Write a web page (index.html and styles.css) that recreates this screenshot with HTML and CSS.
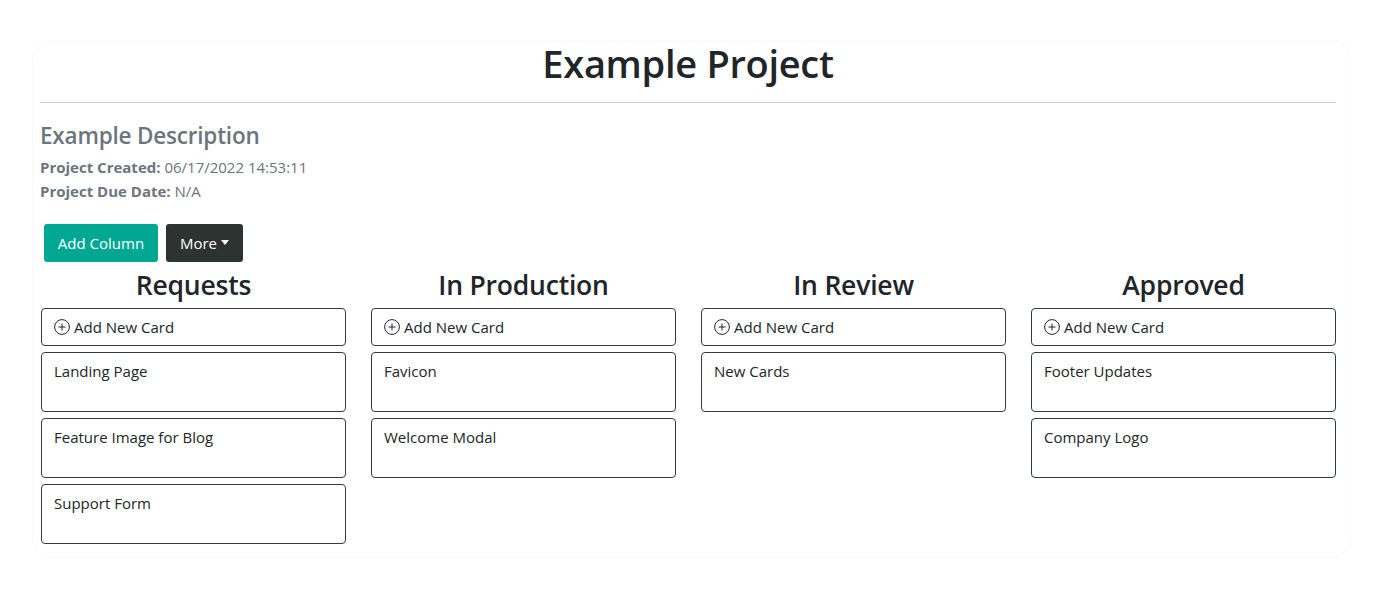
FILE: index.html
```html
<!DOCTYPE html>
<html lang="en">
<head>
<meta charset="utf-8">
<title>Example Project</title>
<link rel="stylesheet" href="styles.css">
</head>
<body>
<div class="project">
  <h1 class="title">Example Project</h1>
  <hr class="rule">
  <h4 class="desc">Example Description</h4>
  <div class="meta"><b>Project Created:</b> 06/17/2022 14:53:11</div>
  <div class="meta"><b>Project Due Date:</b> N/A</div>
  <div class="actions">
    <button class="btn btn-teal">Add Column</button>
    <button class="btn btn-dark">More<span class="caret"></span></button>
  </div>
  <div class="board">
    <div class="column">
      <h2 class="col-title">Requests</h2>
      <div class="card add-card"><svg class="plus" viewBox="0 0 16 16" width="16" height="16"><circle cx="8" cy="8" r="7.4" fill="none" stroke="currentColor" stroke-width="1"/><path d="M8 4.5v7M4.5 8h7" stroke="currentColor" stroke-width="1" fill="none"/></svg>Add New Card</div>
      <div class="card item">Landing Page</div>
      <div class="card item">Feature Image for Blog</div>
      <div class="card item">Support Form</div>
    </div>
    <div class="column">
      <h2 class="col-title">In Production</h2>
      <div class="card add-card"><svg class="plus" viewBox="0 0 16 16" width="16" height="16"><circle cx="8" cy="8" r="7.4" fill="none" stroke="currentColor" stroke-width="1"/><path d="M8 4.5v7M4.5 8h7" stroke="currentColor" stroke-width="1" fill="none"/></svg>Add New Card</div>
      <div class="card item">Favicon</div>
      <div class="card item">Welcome Modal</div>
    </div>
    <div class="column">
      <h2 class="col-title">In Review</h2>
      <div class="card add-card"><svg class="plus" viewBox="0 0 16 16" width="16" height="16"><circle cx="8" cy="8" r="7.4" fill="none" stroke="currentColor" stroke-width="1"/><path d="M8 4.5v7M4.5 8h7" stroke="currentColor" stroke-width="1" fill="none"/></svg>Add New Card</div>
      <div class="card item">New Cards</div>
    </div>
    <div class="column">
      <h2 class="col-title">Approved</h2>
      <div class="card add-card"><svg class="plus" viewBox="0 0 16 16" width="16" height="16"><circle cx="8" cy="8" r="7.4" fill="none" stroke="currentColor" stroke-width="1"/><path d="M8 4.5v7M4.5 8h7" stroke="currentColor" stroke-width="1" fill="none"/></svg>Add New Card</div>
      <div class="card item">Footer Updates</div>
      <div class="card item">Company Logo</div>
    </div>
  </div>
</div>
</body>
</html>
```
FILE: styles.css
```css
* { box-sizing: border-box; }
body {
  margin: 0;
  background: #fff;
  font-family: "Open Sans", "Noto Sans", sans-serif;
  color: #212529;
}
.project {
  margin: 40px 24px 0 32px;
  padding: 0 14px 12px 7px;
  height: 518px;
  border: 1px solid #f9f9f9;
  border-radius: 20px;
}
.title {
  margin: 0;
  font-size: 38px;
  font-weight: 600;
  line-height: 45px;
  text-align: center;
  letter-spacing: -0.3px;
}
.rule {
  margin: 16px 0 0;
  border: 0;
  border-top: 1px solid #cfcfcf;
}
.desc {
  margin: 18px 0 5px;
  font-size: 22.5px;
  font-weight: 600;
  line-height: 29px;
  color: #6c757d;
  letter-spacing: -0.2px;
}
.meta {
  font-size: 15px;
  line-height: 24px;
  color: #6c757d;
}
.meta b { font-weight: 700; }
.actions {
  display: flex;
  gap: 8px;
  margin: 21px 0 0 4px;
}
.btn {
  height: 38px;
  padding: 0 12px;
  border: 0;
  border-radius: 3px;
  font-family: inherit;
  font-size: 15px;
  color: #fff;
  display: flex;
  align-items: center;
}
.btn-teal { background: #00a894; width: 114px; justify-content: center; }
.btn-dark { background: #2d3331; width: 77px; justify-content: center; }
.caret {
  display: inline-block;
  margin-left: 4px;
  margin-top: -2px;
  border-top: 5px solid #fff;
  border-left: 4.5px solid transparent;
  border-right: 4.5px solid transparent;
}
.board {
  display: grid;
  grid-template-columns: repeat(4, 305px);
  column-gap: 25px;
  margin-left: 1px;
}
.column {
  display: flex;
  flex-direction: column;
  gap: 6px;
}
.col-title {
  margin: 0 0 -6px;
  font-size: 26.5px;
  font-weight: 600;
  line-height: 46px;
  text-align: center;
  letter-spacing: -0.2px;
}
.card {
  border: 1px solid #343a40;
  border-radius: 4px;
  font-size: 15px;
  color: #212529;
}
.add-card {
  height: 38px;
  display: flex;
  align-items: center;
  gap: 4px;
  padding-left: 12px;
}
.plus { color: #212529; flex: none; }
.item {
  height: 60px;
  padding: 6px 12px;
  line-height: 24px;
}
```
